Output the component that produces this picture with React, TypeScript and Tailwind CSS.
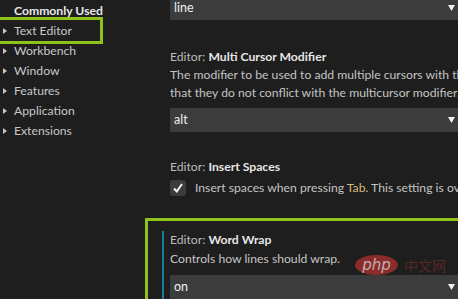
import type { ReactNode } from "react";

const font = { fontFamily: "Lato, 'Segoe UI', 'Noto Sans', sans-serif" };

function Caret() {
  return (
    <svg width="6" height="8" viewBox="0 0 6 8" className="shrink-0">
      <path d="M1 1 L5 4 L1 7 Z" fill="#c5c5c5" />
    </svg>
  );
}

function Select({ value }: { value: string }) {
  return (
    <div className="flex h-6 items-center justify-between bg-[#3c3c3c] pl-1 pr-[3px] text-[12.5px] text-[#f0f0f0]">
      <span>{value}</span>
      <svg width="7" height="6" viewBox="0 0 7 6">
        <path d="M0 0 H7 L3.5 6 Z" fill="#f0f0f0" />
      </svg>
    </div>
  );
}

function Title({ label }: { label: string }) {
  return (
    <div className="leading-[18px] text-[#bbbbbb]">
      Editor: <span className="font-bold text-[#e6e6e6]">{label}</span>
    </div>
  );
}

function Desc({ children }: { children: ReactNode }) {
  return <div className="whitespace-nowrap leading-[18px] text-[#c4c4c4]">{children}</div>;
}

const nav = ["Text Editor", "Workbench", "Window", "Features", "Application", "Extensions"];

export default function App() {
  return (
    <div
      className="relative flex h-[299px] w-[458px] overflow-hidden bg-[#1e1e1e] text-[12.2px]"
      style={font}
    >
      <aside className="w-[162px] shrink-0 pt-[2px]">
        <div className="pl-[14px] font-bold leading-[18px] text-[#e8e8e8]">Commonly Used</div>
        <ul className="mt-[1px]">
          {nav.map((item) => (
            <li key={item} className="flex h-5 items-center gap-[5px] pl-[2px] text-[#c8c8c8]">
              <Caret />
              <span className="pl-[1px]">{item}</span>
            </li>
          ))}
        </ul>
      </aside>

      <main className="min-w-0 flex-1">
        <div className="-mt-1 pl-2">
          <Select value="line" />
        </div>

        <section className="mt-7 pl-2">
          <Title label="Multi Cursor Modifier" />
          <Desc>The modifier to be used to add multiple cursors with the mouse.</Desc>
          <Desc>that they do not conflict with the multicursor modifier.</Desc>
          <div className="mt-1.5">
            <Select value="alt" />
          </div>
        </section>

        <section className="mt-[26px] pl-2">
          <Title label="Insert Spaces" />
          <div className="mt-[3px] flex items-center gap-[9px]">
            <div className="flex h-4 w-4 shrink-0 items-center justify-center rounded-[3px] bg-[#3c3c3c]">
              <svg width="12" height="12" viewBox="0 0 12 12">
                <path d="M2 6.5 L4.8 9.5 L10 2" fill="none" stroke="#f2f2f2" strokeWidth="2" />
              </svg>
            </div>
            <Desc>
              Insert spaces when pressing <span className="text-[#d7ba7d]">Tab</span>. This setting
              is overridden based on the file contents.
            </Desc>
          </div>
        </section>

        <section className="mt-[34px] border-l-2 border-[#1a7ea3] pl-[6px]">
          <Title label="Word Wrap" />
          <div className="mt-[1px]">
            <Desc>Controls how lines should wrap.</Desc>
          </div>
          <div className="mt-[7px]">
            <Select value="on" />
          </div>
        </section>
      </main>

      {/* annotation boxes */}
      <div className="pointer-events-none absolute left-[-3px] top-[17px] h-[27px] w-[106px] border-[3px] border-[#8fc31a]" />
      <div className="pointer-events-none absolute left-[145px] top-[218px] h-[100px] w-[330px] border-[3px] border-[#8fc31a]" />

      {/* watermark */}
      <div className="pointer-events-none absolute left-[355px] top-[255px] flex items-center gap-[6px] opacity-75">
        <div className="flex h-5 w-[43px] items-center justify-center rounded-[50%] bg-[#b03030]">
          <span className="text-[15px] italic leading-none text-[#f4dede]" style={{ fontFamily: "'DejaVu Sans', sans-serif" }}>
            php
          </span>
        </div>
        <span
          className="text-[14px] leading-none text-[#6a2a2a]"
          style={{ fontFamily: "'Noto Sans CJK SC', sans-serif" }}
        >
          中文网
        </span>
      </div>
    </div>
  );
}
